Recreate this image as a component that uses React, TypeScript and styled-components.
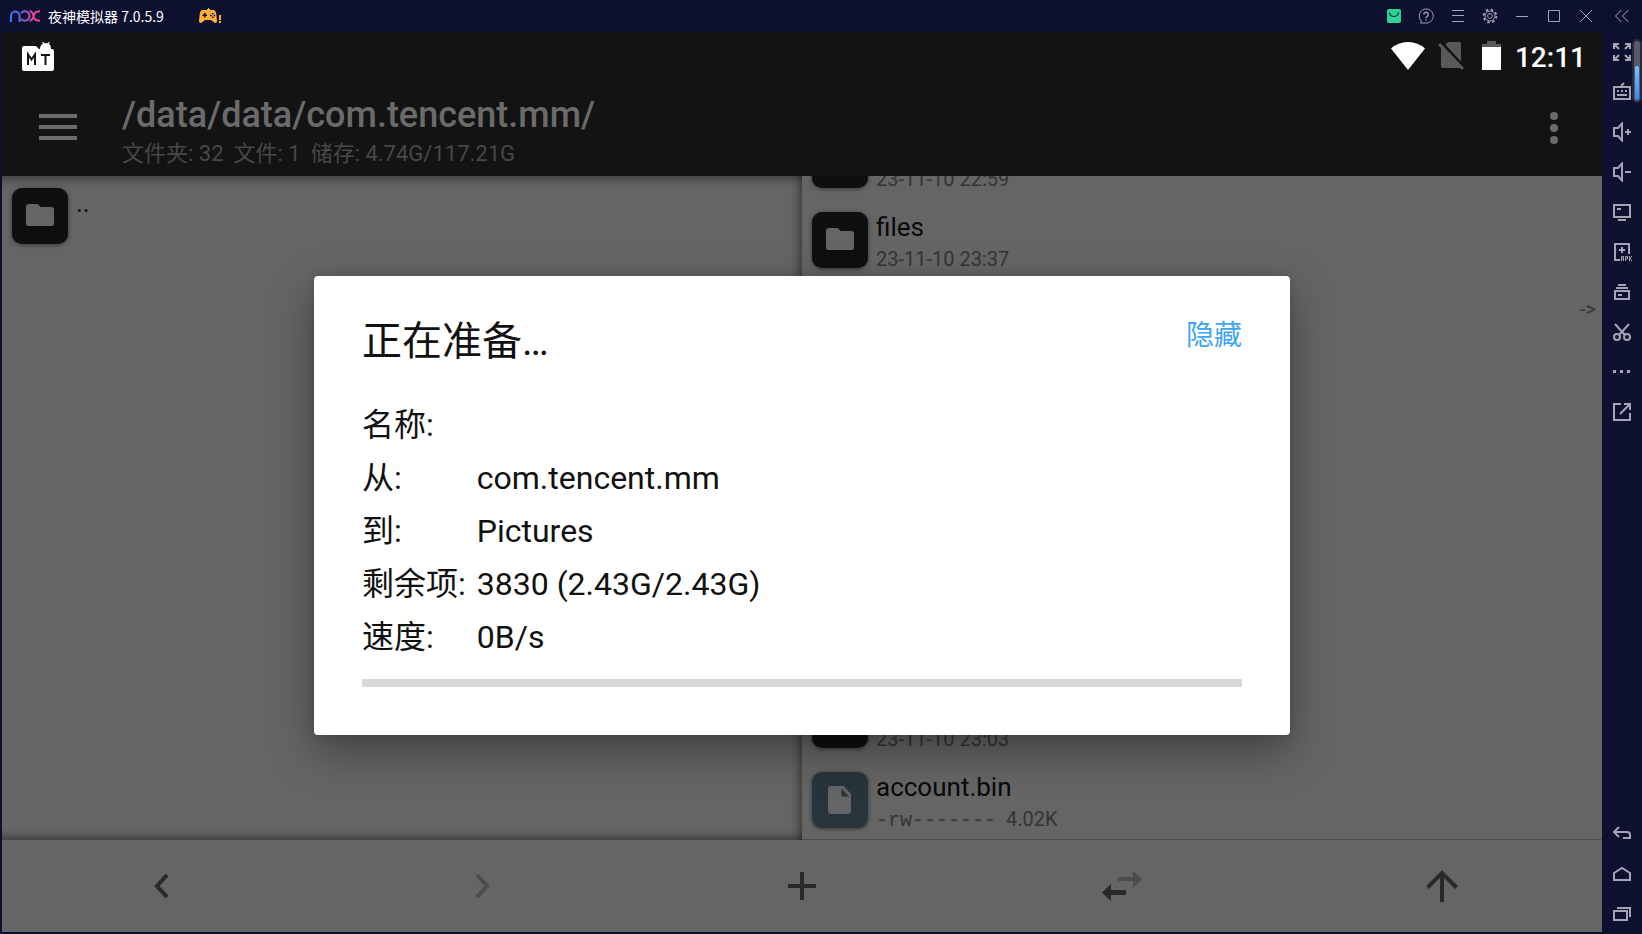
import React from 'react';
import styled, { createGlobalStyle } from 'styled-components';

const GlobalStyle = createGlobalStyle`
  * { box-sizing: border-box; }
  body { margin: 0; background: #0e1030; font-family: Roboto, 'Noto Sans CJK SC', sans-serif; }
  button { border: 0; padding: 0; background: none; font: inherit; color: inherit; cursor: pointer; }
  svg { display: block; flex: none; }
`;

const Window = styled.div`
  display: flex;
  flex-direction: column;
  height: 100vh;
  background: #0e1030;
  overflow: hidden;
`;

const TitleBar = styled.header`
  display: flex;
  align-items: center;
  height: 32px;
  flex: none;
  padding-left: 10px;
  color: #fff;
`;

const WindowName = styled.span`
  margin: 0 35px 0 8px;
  font: 14px/32px 'Noto Sans CJK SC', sans-serif;
  white-space: pre;
`;

const WindowControls = styled.div`
  display: flex;
  margin-left: auto;
  color: #a3a5b4;
`;

const ControlButton = styled.button<{ $wide?: boolean }>`
  display: grid;
  place-items: center;
  width: ${(p) => (p.$wide ? 40 : 32)}px;
  height: 32px;
`;

const Body = styled.div`
  display: flex;
  flex: 1;
  min-height: 0;
`;

const Screen = styled.main`
  position: relative;
  display: flex;
  flex-direction: column;
  flex: 1;
  min-width: 0;
  margin: 0 0 2px 2px;
  background: #656565;
`;

const StatusBar = styled.div`
  display: flex;
  align-items: center;
  height: 48px;
  flex: none;
  padding: 0 16px 0 20px;
  background: #131313;
  color: #fff;
`;

const StatusIcons = styled.div`
  display: flex;
  align-items: center;
  gap: 12px;
  margin-left: auto;
`;

const Clock = styled.time`
  padding-top: 4px;
  font-size: 28px;
  font-weight: 500;
  line-height: 44px;
`;

const AppBar = styled.div`
  display: flex;
  height: 96px;
  flex: none;
  background: #131313;
  color: #6b6b6b;
`;

const AppBarButton = styled.button<{ $width: number }>`
  display: grid;
  place-items: center;
  width: ${(p) => p.$width}px;
  height: 96px;
`;

const PathBlock = styled.div`
  flex: 1;
  padding: 13px 0 0 8px;
  white-space: pre;
`;

const PathTitle = styled.h1`
  margin: 0;
  font-size: 36px;
  font-weight: 500;
  line-height: 44px;
`;

const PathInfo = styled.p`
  display: flex;
  gap: 10px;
  margin: 0;
  color: #484848;
  font-size: 22px;
  line-height: 34px;
`;

const Panes = styled.div`
  display: flex;
  flex: 1;
  min-height: 0;
`;

const Pane = styled.ul<{ $active?: boolean }>`
  display: flex;
  flex: 1;
  flex-direction: column;
  justify-content: ${(p) => (p.$active ? 'flex-end' : 'flex-start')};
  min-width: 0;
  margin: 0;
  padding: 0;
  overflow: hidden;
  list-style: none;
  background: ${(p) =>
    p.$active
      ? 'linear-gradient(to top, #4d4d4d 1px, transparent 1px), #656565'
      : `linear-gradient(to bottom, rgba(0,0,0,.32), rgba(0,0,0,.1) 6px, transparent 13px),
         linear-gradient(to top, rgba(0,0,0,.32), rgba(0,0,0,.1) 6px, transparent 11px),
         linear-gradient(to left, rgba(0,0,0,.32), rgba(0,0,0,.1) 6px, transparent 12px),
         #656565`};
`;

const FileRow = styled.li`
  display: flex;
  flex: none;
  gap: 8px;
  height: 80px;
  padding: 12px 6px 0 10px;
`;

const FileIcon = styled.span<{ $document?: boolean }>`
  display: grid;
  place-items: center;
  width: 56px;
  height: 56px;
  flex: none;
  border-radius: 10px;
  background: ${(p) => (p.$document ? '#27343a' : '#0f0f0f')};
  color: #656565;
  box-shadow: 0 1px 4px rgba(0, 0, 0, 0.5);
`;

const FileText = styled.div`
  flex: 1;
  white-space: pre;
`;

const FileName = styled.div`
  color: #090909;
  font-size: 26px;
  line-height: 30px;
`;

const FileMeta = styled.div`
  color: #343434;
  font-size: 20px;
  line-height: 34px;
`;

const Mode = styled.span`
  font-family: 'Liberation Mono', monospace;
`;

const LinkMark = styled.span`
  color: #343434;
  font-size: 20px;
  line-height: 34px;
`;

const ActionBar = styled.nav`
  display: flex;
  height: 92px;
  flex: none;
  color: #292929;
`;

const ActionButton = styled.button`
  display: grid;
  flex: 1;
  place-items: center;
  &:disabled { color: #4c4c4c; }
`;

const DialogLayer = styled.div`
  position: absolute;
  inset: 48px 0 1px;
  display: grid;
  place-items: center;
`;

const Dialog = styled.section`
  width: 61%;
  padding: 38px 48px 48px;
  border-radius: 4px;
  background: #fff;
  color: #111;
  box-shadow: 0 16px 44px rgba(0, 0, 0, 0.36), 0 0 10px rgba(0, 0, 0, 0.12);
`;

const DialogHead = styled.div`
  display: flex;
  align-items: flex-start;
  justify-content: space-between;
  margin-bottom: 29px;
`;

const DialogTitle = styled.h2`
  margin: 0;
  font-size: 40px;
  font-weight: 400;
  line-height: 56px;
`;

const HideButton = styled.button`
  && {
    color: #40a5f5;
    font-size: 28px;
    line-height: 44px;
  }
`;

const Details = styled.dl`
  display: grid;
  grid-template-columns: max-content 1fr;
  grid-auto-rows: 53px;
  column-gap: 11px;
  margin: 0 0 15px;
  font-size: 32px;
  line-height: 53px;
  dd { margin: 0; }
`;

const Progress = styled.progress`
  display: block;
  width: 100%;
  height: 8px;
  appearance: none;
  border: 0;
  background: #d7d7d7;
  &::-webkit-progress-bar { background: #d7d7d7; }
  &::-webkit-progress-value { background: #2196f3; }
`;

const SideBar = styled.aside`
  position: relative;
  display: flex;
  flex-direction: column;
  width: 40px;
  flex: none;
  color: #a3a5b4;
`;

const SideButton = styled.button`
  display: grid;
  place-items: center;
  height: 40px;
`;

const SideSpacer = styled.div`
  flex: 1;
`;

const ScrollTrack = styled.div`
  position: absolute;
  top: 7px;
  right: 0;
  width: 10px;
  height: 64px;
  padding: 25px 1px 0;
  border: 2px solid #282a3a;
  border-radius: 5px;
  background: #565a70;
`;

const ScrollThumb = styled.div`
  height: 34px;
  border-radius: 3px;
  background: linear-gradient(#74c4ff, #3985f5);
`;

type DrawingProps = { w?: number; h?: number; sw?: number; children: React.ReactNode };

const Line = ({ w = 20, h = 20, sw = 2, children }: DrawingProps) => (
  <svg width={w} height={h} viewBox={`0 0 ${w} ${h}`} fill="none" stroke="currentColor" strokeWidth={sw} aria-hidden="true">
    {children}
  </svg>
);

const Solid = ({ w = 20, h = 20, children }: DrawingProps) => (
  <svg width={w} height={h} viewBox={`0 0 ${w} ${h}`} fill="currentColor" aria-hidden="true">
    {children}
  </svg>
);

const NoxLogo = () => (
  <svg width="30" height="12" viewBox="0 0 30 12" fill="none" strokeWidth="2" aria-hidden="true">
    <defs>
      <linearGradient id="nox" gradientUnits="userSpaceOnUse" x1="0" y1="0" x2="30" y2="0">
        <stop offset="0" stopColor="#2f7bff" />
        <stop offset=".5" stopColor="#8a5cd0" />
        <stop offset=".75" stopColor="#e044a8" />
        <stop offset="1" stopColor="#ff3d86" />
      </linearGradient>
    </defs>
    <g stroke="url(#nox)">
      <path d="M1 12V6a4.3 4.3 0 0 1 4.3-4.5A4.3 4.3 0 0 1 9.600 6v6" />
      <path d="M11 3.200A4.700 4.700 0 1 1 11 8.800" />
      <path d="M19.500 1.300c3 0 3.500 2 4 4.700s1.500 4.700 6.500 4.700M30 1.300c-5 0-5.500 2-6.300 4.700s-1.400 4.700-4.400 4.700" />
    </g>
  </svg>
);

const Gamepad = () => (
  <svg width="24" height="16" viewBox="0 0 24 16" aria-hidden="true">
    <path fill="#ffb03b" fillRule="evenodd" d="M4 2h4V1h1V0h1v1h1v1h3c2 0 3 2 3.300 4l.7 7c0 2-2 2.600-3.500 1L12 12H6l-2.500 2C2 15.600 0 15 0 13l.7-7C1 4 2 2 4 2zm1 3v1.500H3.500V8H5v1.500h1.600V8H8V6.500H6.600V5zm8 0v1.500h1.500V5zm-2 1.700v1.500h1.500V6.700zm3.700 0v1.500h1.500V6.700zM13 8.400v1.500h1.500V8.400z" />
    <path fill="#ffb03b" d="M20 7h2v5h-2zm0 6h2v2h-2z" />
  </svg>
);

const Volume = ({ plus }: { plus?: boolean }) => (
  <Line>
    <path d="M2 6h4l4-4.500V18.500L6 14H2z" />
    <path d={plus ? 'M13 10h6M16 7v6' : 'M13 10h6'} />
  </Line>
);

const Folder = () => (
  <Solid w={28} h={24}>
    <path d="M3 0h8q1 0 1.600.8L14.500 3H25q3 0 3 3v13.500q0 2.500-2.500 2.500h-23Q0 22 0 19.500V3q0-3 3-3z" />
  </Solid>
);

const Document = () => (
  <Solid w={24} h={28}>
    <path fillRule="evenodd" d="M3 0h12.500L23 8v17q0 3-3 3H3q-3 0-3-3V3q0-3 3-3zm10.500 2.500V10.500H21z" />
  </Solid>
);

const windowControls: { label: string; icon: React.ReactNode }[] = [
  { label: '应用中心', icon: <svg width="14" height="14" viewBox="0 0 14 14"><rect width="14" height="14" rx="2" fill="#2bd394" /><path d="M2.500 3.500a4.500 4 0 0 0 9 0" fill="none" stroke="#10204a" strokeWidth="1.200" /></svg> },
  { label: '帮助', icon: <Line w={16} h={16} sw={1}><path d="M3.500 13.200A7 7 0 1 1 7.500 15H2.500z" /><path d="M5.800 6.500a2.200 2.200 0 1 1 3.500 1.700C8.200 9 8 9.300 8 10.200M8 11.200v1.400" strokeWidth="1.400" /></Line> },
  { label: '菜单', icon: <Line w={12} h={12} sw={1}><path d="M0 .5h12M0 5.500h12M0 11.500h12" /></Line> },
  { label: '设置', icon: <Line w={16} h={16} sw={1}><circle cx="8" cy="8" r="5" /><circle cx="8" cy="8" r="2.400" /><circle cx="8" cy="8" r="6.400" strokeWidth="1.800" strokeDasharray="2.500 2.526" /></Line> },
  { label: '最小化', icon: <Line w={12} h={12} sw={1}><path d="M0 6.500h12" /></Line> },
  { label: '最大化', icon: <Line w={12} h={12} sw={1}><path d="M.5.5h11v11H.500z" /></Line> },
  { label: '关闭', icon: <Line w={12} h={12} sw={1}><path d="M0 0l12 12M12 0L0 12" /></Line> },
];

const sideTools: { label: string; icon: React.ReactNode }[] = [
  { label: '全屏', icon: <Line><path d="M2 7V2h5M2 2l5 5M13 2h5v5M18 2l-5 5M2 13v5h5M2 18l5-5M18 13v5h-5M18 18l-5-5" /></Line> },
  { label: '键盘', icon: <Line><path d="M2 5h16v12H2zM9 4l3-3M5 9h2M9 9h2M13 9h2M5 13h10" /></Line> },
  { label: '音量加', icon: <Volume plus /> },
  { label: '音量减', icon: <Volume /> },
  { label: '虚拟屏幕', icon: <Line><path d="M2 3h16v12H2zM5 7h4M6 18h8" /></Line> },
  { label: '安装 APK', icon: <Line><path d="M8 18H3V2h14v10M10 5v6M7 8h6" /><path strokeWidth="1" d="M9.500 19v-4.500h2V19M9.500 17h2M13.500 19v-4.500h2V17h-2M17.500 14v5M20 14l-2 2.500 2 2.500" /></Line> },
  { label: '多开', icon: <Line><path d="M3 9h14v8H3zM4 6h12M6 3h8M6 13h4" /></Line> },
  { label: '截图', icon: <Line><path d="M3 2l10 11M17 2L7 13" /><circle cx="5" cy="15" r="3" /><circle cx="15" cy="15" r="3" /></Line> },
  { label: '更多', icon: <Line sw={3}><path d="M1 9.500h3M8 9.500h3M15 9.500h3" /></Line> },
  { label: '打开', icon: <Line><path d="M9 2H2v16h16v-7M12 2h6v6M18 2L8 12" /></Line> },
];

const systemKeys: { label: string; icon: React.ReactNode }[] = [
  { label: '返回', icon: <Line><path d="M7 3L2 8l5 5M2 8h13q3 0 3 3v3h-7" /></Line> },
  { label: '主页', icon: <Line><path d="M2 9l8-5 8 5v7H2z" /></Line> },
  { label: '最近任务', icon: <Line><path d="M2 7h13v9H2zM5 4h13v9" /></Line> },
];

type FileEntry = { name?: string; meta?: React.ReactNode; document?: boolean; link?: boolean };

const rightFiles: FileEntry[] = [
  { meta: '23-11-10 22:59' },
  { name: 'files', meta: '23-11-10 23:37' },
  { link: true },
  {},
  {},
  {},
  {},
  { meta: '23-11-10 23:03' },
  { name: 'account.bin', meta: <><Mode>-rw-------</Mode>  4.02K</>, document: true },
];

const FileItem = ({ name, meta, document, link }: FileEntry) => (
  <FileRow>
    <FileIcon $document={document}>{document ? <Document /> : <Folder />}</FileIcon>
    <FileText>
      <FileName>{name ?? '\u00a0'}</FileName>
      {meta && <FileMeta>{meta}</FileMeta>}
    </FileText>
    {link && <LinkMark>{'->'}</LinkMark>}
  </FileRow>
);

const details: [string, string][] = [
  ['名称:', ''],
  ['从:', 'com.tencent.mm'],
  ['到:', 'Pictures'],
  ['剩余项:', '3830 (2.43G/2.43G)'],
  ['速度:', '0B/s'],
];

export default function App() {
  return (
    <Window>
      <GlobalStyle />
      <TitleBar>
        <NoxLogo />
        <WindowName>夜神模拟器 7.0.5.9</WindowName>
        <Gamepad />
        <WindowControls>
          {windowControls.map((c) => (
            <ControlButton key={c.label} aria-label={c.label}>{c.icon}</ControlButton>
          ))}
          <ControlButton $wide aria-label="收起">
            <Line w={14} h={12} sw={1}><path d="M6.500 0l-6 6 6 6M13.500 0l-6 6 6 6" /></Line>
          </ControlButton>
        </WindowControls>
      </TitleBar>
      <Body>
        <Screen>
          <StatusBar>
            <svg width="32" height="30" viewBox="0 -1 32 30" aria-hidden="true">
              <path fill="#fff" d="M2 4h12l3 3h1c0-3 1.500-4.500 3-5.200L20 0h1l1.500 1.300h3L27 0h1l-1.200 1.800C28.500 3 29 5 29 7h1q2 0 2 2v18q0 2-2 2H2q-2 0-2-2V6q0-2 2-2z" />
              <path fill="none" stroke="#131313" strokeWidth="2" d="M6 23V12.500l3.500 5 3.500-5V23M19 13h9M23.500 13v10" />
            </svg>
            <StatusIcons>
              <Solid w={36} h={30}><path d="M18 29L1 7.500Q8 1 18 1t17 6.500z" /></Solid>
              <svg width="26" height="30" viewBox="0 0 26 30" aria-hidden="true">
                <path fill="#595959" d="M10 1h11q2 0 2 2v24H5q-2 0-2-2V8z" />
                <path stroke="#131313" strokeWidth="3" d="M3 1l23 25" />
                <path stroke="#595959" strokeWidth="3" d="M1 3l24 25" />
              </svg>
              <svg width="27" height="30" viewBox="0 0 27 30" aria-hidden="true">
                <path fill="#595959" d="M11 0h9v3h5v4H6V3h5z" />
                <path fill="#fff" d="M6 6h19v23H6z" />
              </svg>
              <Clock>12:11</Clock>
            </StatusIcons>
          </StatusBar>
          <AppBar>
            <AppBarButton $width={112} aria-label="导航菜单">
              <Line w={38} h={28} sw={4}><path d="M0 2h38M0 13h38M0 24h38" /></Line>
            </AppBarButton>
            <PathBlock>
              <PathTitle>/data/data/com.tencent.mm/</PathTitle>
              <PathInfo>
                <span>文件夹: 32</span>
                <span>文件: 1</span>
                <span>储存: 4.74G/117.21G</span>
              </PathInfo>
            </PathBlock>
            <AppBarButton $width={96} aria-label="更多选项">
              <Solid w={8} h={32}><circle cx="4" cy="4" r="4" /><circle cx="4" cy="16" r="4" /><circle cx="4" cy="28" r="4" /></Solid>
            </AppBarButton>
          </AppBar>
          <Panes>
            <Pane><FileItem name=".." /></Pane>
            <Pane $active>{rightFiles.map((f, i) => <FileItem key={i} {...f} />)}</Pane>
          </Panes>
          <ActionBar>
            <ActionButton aria-label="后退"><Line w={16} h={24} sw={4}><path d="M13 1L3 12l10 11" /></Line></ActionButton>
            <ActionButton aria-label="前进" disabled><Line w={16} h={24} sw={4}><path d="M3 1l10 11L3 23" /></Line></ActionButton>
            <ActionButton aria-label="新建"><Line w={28} h={28} sw={4}><path d="M14 0v28M0 14h28" /></Line></ActionButton>
            <ActionButton aria-label="切换">
              <svg width="40" height="30" viewBox="0 0 40 30" aria-hidden="true">
                <path fill="#4c4c4c" d="M16 6h15V0l9 8-9 9v-7H16z" />
                <path fill="#292929" d="M24 19H9v-6l-9 8.500L9 30v-6h15z" />
              </svg>
            </ActionButton>
            <ActionButton aria-label="上级目录"><Line w={32} h={32} sw={4}><path d="M16 32V3M1.500 17.500L16 3l14.500 14.500" /></Line></ActionButton>
          </ActionBar>
          <DialogLayer>
            <Dialog role="dialog" aria-labelledby="progress-title">
              <DialogHead>
                <DialogTitle id="progress-title">正在准备…</DialogTitle>
                <HideButton>隐藏</HideButton>
              </DialogHead>
              <Details>
                {details.map(([label, value]) => (
                  <React.Fragment key={label}>
                    <dt>{label}</dt>
                    <dd>{value}</dd>
                  </React.Fragment>
                ))}
              </Details>
              <Progress value={0} max={100} aria-labelledby="progress-title" />
            </Dialog>
          </DialogLayer>
        </Screen>
        <SideBar>
          {sideTools.map((t) => <SideButton key={t.label} aria-label={t.label}>{t.icon}</SideButton>)}
          <SideSpacer />
          {systemKeys.map((t) => <SideButton key={t.label} aria-label={t.label}>{t.icon}</SideButton>)}
          <ScrollTrack><ScrollThumb /></ScrollTrack>
        </SideBar>
      </Body>
    </Window>
  );
}
